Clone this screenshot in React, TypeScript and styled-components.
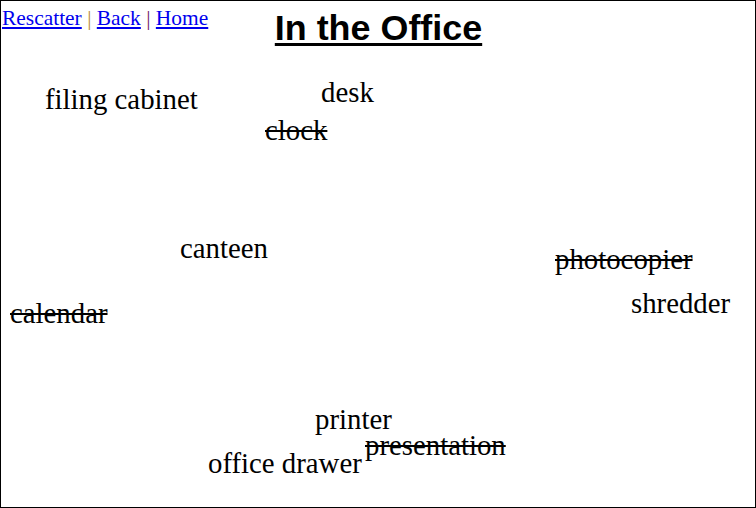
import React from "react";
import styled, { createGlobalStyle } from "styled-components";

const Global = createGlobalStyle`
  html, body { margin: 0; padding: 0; background: #ffffff; }
  body { font-family: "Liberation Serif", "Times New Roman", serif; }
`;

const Frame = styled.div`
  position: relative;
  box-sizing: border-box;
  width: 756px;
  height: 508px;
  border: 1px solid #000000;
  background: #ffffff;
  overflow: hidden;
`;

const Header = styled.header`
  display: grid;
  grid-template-columns: 1fr auto 1fr;
  align-items: start;
`;

const Nav = styled.nav`
  padding: 7px 0 0 1px;
  font-family: "Liberation Serif", "Times New Roman", serif;
  font-size: 21.45px;
  line-height: 1;
  white-space: nowrap;
`;

const NavLink = styled.a`
  color: #0000ee;
  text-decoration: underline;
`;

const Sep = styled.span<{ $tone: string }>`
  color: ${(p) => p.$tone};
`;

const Title = styled.h1`
  margin: 10px 0 0 1px;
  font-family: "Liberation Sans", Arial, sans-serif;
  font-weight: bold;
  font-size: 35.9px;
  line-height: 1;
  text-decoration: underline;
  text-decoration-thickness: 3px;
  text-underline-offset: 3px;
  color: #000000;
  white-space: nowrap;
`;

const Word = styled.span.attrs<{ $x: number; $y: number }>((p) => ({
  style: { left: `${p.$x}px`, top: `${p.$y}px` },
}))<{ $x: number; $y: number; $done?: boolean }>`
  position: absolute;
  font-family: "Liberation Serif", "Times New Roman", serif;
  font-size: 28.8px;
  line-height: 1;
  color: #000000;
  white-space: nowrap;
  text-decoration: ${(p) => (p.$done ? "line-through" : "none")};
`;

type Item = { text: string; x: number; baseline: number; done?: boolean };

const items: Item[] = [
  { text: "filing cabinet", x: 45, baseline: 108 },
  { text: "desk", x: 321, baseline: 101 },
  { text: "clock", x: 265, baseline: 139, done: true },
  { text: "canteen", x: 180, baseline: 257 },
  { text: "photocopier", x: 555, baseline: 268, done: true },
  { text: "shredder", x: 631, baseline: 312 },
  { text: "calendar", x: 10, baseline: 322, done: true },
  { text: "printer", x: 315, baseline: 428 },
  { text: "presentation", x: 365, baseline: 454, done: true },
  { text: "office drawer", x: 208, baseline: 472 },
];

export default function App() {
  return (
    <>
      <Global />
      <Frame>
        <Header>
          <Nav>
            <NavLink href="#">Rescatter</NavLink>{" "}
            <Sep $tone="#b98a42">|</Sep>{" "}
            <NavLink href="#">Back</NavLink>{" "}
            <Sep $tone="#6e1a6a">|</Sep>{" "}
            <NavLink href="#">Home</NavLink>
          </Nav>
          <Title>In the Office</Title>
          <div />
        </Header>
        {items.map((it) => (
          <Word
            key={it.text}
            $x={it.x - 1}
            $y={it.baseline - 24}
            $done={it.done}
          >
            {it.text}
          </Word>
        ))}
      </Frame>
    </>
  );
}
